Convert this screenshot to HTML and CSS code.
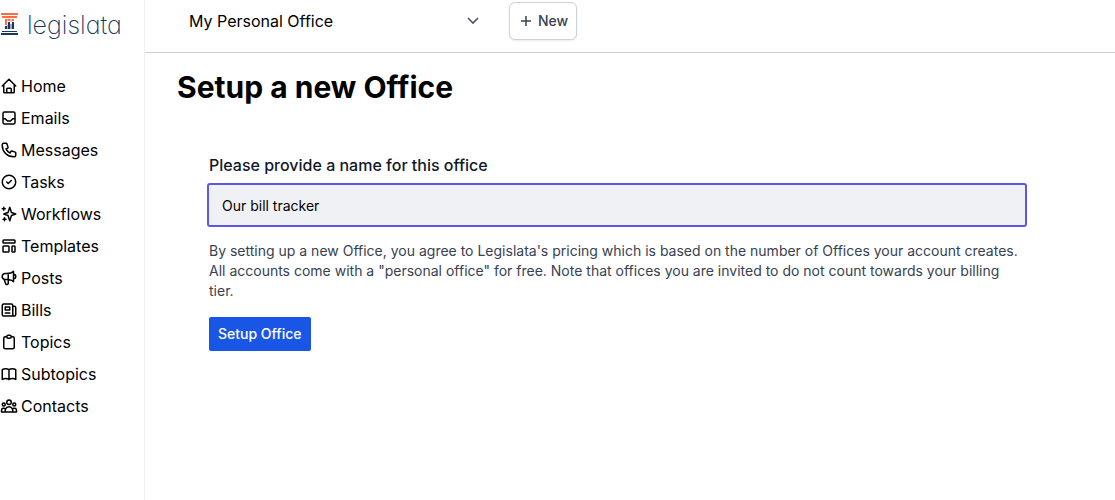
FILE: index.html
```html
<!DOCTYPE html>
<html lang="en">
<head>
<meta charset="utf-8">
<meta name="viewport" content="width=device-width, initial-scale=1">
<title>Setup a new Office - Legislata</title>
<link rel="stylesheet" href="styles.css">
</head>
<body>
<div class="app">
  <aside class="sidebar">
    <a class="logo" href="#">
      <svg class="logo-mark" viewBox="0 0 17 22" aria-hidden="true">
        <path fill="#ff6b45" d="M0 0h17v2H0zM1 3h15v2H1zM4 6h2v6H4zM7 6h2v2H7zM11 6h2v2h-2z"/>
        <path fill="#ff6b45" opacity=".45" d="M6 6h1v2H6zM9 6h2v3H9z"/>
        <path fill="#17375e" d="M4 13h2v3H4zM7 9h2v7H7zM11 9h2v7h-2zM1 18h15v1H1zM0 20h17v2H0z"/>
        <path fill="#17375e" opacity=".4" d="M6 12h1v4H6zM9 11h2v5H9z"/>
      </svg>
      <span>legislata</span>
    </a>
    <nav class="nav" aria-label="Main">
      <a href="#"><svg class="icon" viewBox="0 0 24 24"><path d="m3 12 2-2m0 0 7-7 7 7M5 10v10a1 1 0 0 0 1 1h3m10-11 2 2m-2-2v10a1 1 0 0 1-1 1h-3m-6 0v-5a1 1 0 0 1 1-1h4a1 1 0 0 1 1 1v5m-6 0h6"/></svg>Home</a>
      <a href="#"><svg class="icon" viewBox="0 0 24 24"><path d="M20 13V6a2 2 0 0 0-2-2H6a2 2 0 0 0-2 2v7m16 0v5a2 2 0 0 1-2 2H6a2 2 0 0 1-2-2v-5m16 0h-3l-3 3h-4l-3-3H4"/></svg>Emails</a>
      <a href="#"><svg class="icon" viewBox="0 0 24 24"><path d="M3 5a2 2 0 0 1 2-2h3.3a1 1 0 0 1 .9.7l1.5 4.5a1 1 0 0 1-.5 1.2l-2.2 1.1a11 11 0 0 0 5.5 5.5l1.1-2.2a1 1 0 0 1 1.2-.5l4.5 1.5a1 1 0 0 1 .7.9V19a2 2 0 0 1-2 2h-1C9.700 21 3 14.300 3 6z"/></svg>Messages</a>
      <a href="#"><svg class="icon" viewBox="0 0 24 24"><path d="m9 12 2 2 4-4"/><circle cx="12" cy="12" r="9"/></svg>Tasks</a>
      <a href="#"><svg class="icon" viewBox="0 0 24 24"><path d="M5 3v4M3 5h4M6 17v4M4 19h4M13 3l2.300 6.900L21 12l-5.700 2.100L13 21l-2.300-6.900L5 12l5.700-2.100z"/></svg>Workflows</a>
      <a href="#"><svg class="icon" viewBox="0 0 24 24"><path d="M4 5a1 1 0 0 1 1-1h14a1 1 0 0 1 1 1v2a1 1 0 0 1-1 1H5a1 1 0 0 1-1-1zM4 13a1 1 0 0 1 1-1h6a1 1 0 0 1 1 1v6a1 1 0 0 1-1 1H5a1 1 0 0 1-1-1zM16 13a1 1 0 0 1 1-1h2a1 1 0 0 1 1 1v6a1 1 0 0 1-1 1h-2a1 1 0 0 1-1-1z"/></svg>Templates</a>
      <a href="#"><svg class="icon" viewBox="0 0 24 24"><path d="M11 5.900v13.300a1.800 1.800 0 0 1-3.400.6l-2.200-6.100M18 13a3 3 0 1 0 0-6M5.400 13.700A4 4 0 0 1 7 6h1.800C12.900 6 16.500 4.800 18 3v14c-1.500-1.800-5.100-3-9.200-3H7a4 4 0 0 1-1.600-.3z"/></svg>Posts</a>
      <a href="#"><svg class="icon" viewBox="0 0 24 24"><path d="M19 20H5a2 2 0 0 1-2-2V6a2 2 0 0 1 2-2h10a2 2 0 0 1 2 2v1m2 13a2 2 0 0 1-2-2V7m2 13a2 2 0 0 0 2-2V9a2 2 0 0 0-2-2h-2M13 16H7M7 8h6v4H7z"/></svg>Bills</a>
      <a href="#"><svg class="icon" viewBox="0 0 24 24"><path d="M9 5H7a2 2 0 0 0-2 2v12a2 2 0 0 0 2 2h10a2 2 0 0 0 2-2V7a2 2 0 0 0-2-2h-2M9 5a2 2 0 0 0 2 2h2a2 2 0 0 0 2-2M9 5a2 2 0 0 1 2-2h2a2 2 0 0 1 2 2"/></svg>Topics</a>
      <a href="#"><svg class="icon" viewBox="0 0 24 24"><path d="M12 6.300v13M12 6.300C10.800 5.500 9.200 5 7.500 5S4.200 5.500 3 6.300v13c1.200-.8 2.800-1.300 4.500-1.300s3.300.5 4.500 1.300M12 6.300C13.200 5.500 14.800 5 16.500 5s3.300.5 4.500 1.300v13c-1.200-.8-2.800-1.300-4.500-1.300s-3.300.5-4.500 1.300"/></svg>Subtopics</a>
      <a href="#"><svg class="icon" viewBox="0 0 24 24"><path d="M17 20h5v-2a3 3 0 0 0-5.400-1.900M17 20H7m10 0v-2c0-.7-.1-1.300-.4-1.900M7 20H2v-2a3 3 0 0 1 5.400-1.900M7 20v-2c0-.7.1-1.300.4-1.900m0 0a5 5 0 0 1 9.200 0M15 7a3 3 0 1 1-6 0 3 3 0 0 1 6 0zm6 3a2 2 0 1 1-4 0 2 2 0 0 1 4 0zM7 10a2 2 0 1 1-4 0 2 2 0 0 1 4 0z"/></svg>Contacts</a>
    </nav>
  </aside>
  <div class="content">
    <header class="topbar">
      <div class="office-picker">
        <select class="office-select" aria-label="Office"><option>My Personal Office</option></select>
        <svg class="chevron" viewBox="0 0 16 16" aria-hidden="true"><path d="m3 6 5 5 5-5"/></svg>
      </div>
      <button class="new-button" type="button"><svg class="plus" viewBox="0 0 10 10" aria-hidden="true"><path d="M5 0v10M0 5h10"/></svg>New</button>
    </header>
    <main class="main">
      <h1 class="title">Setup a new Office</h1>
      <form class="form">
        <label class="label" for="office-name">Please provide a name for this office</label>
        <input class="input" id="office-name" type="text" value="Our bill tracker">
        <p class="note">By setting up a new Office, you agree to Legislata's pricing which is based on the number of Offices your account creates. All accounts come with a "personal office" for free. Note that offices you are invited to do not count towards your billing tier.</p>
        <button class="submit" type="button">Setup Office</button>
      </form>
    </main>
  </div>
</div>
</body>
</html>
```
FILE: styles.css
```css
*, *::before, *::after { box-sizing: border-box; }
body {
  margin: 0;
  background: #fff;
  color: #000;
  font: 16px/24px Inter, "Liberation Sans", sans-serif;
}
button, input, select { font: inherit; }
a { color: inherit; text-decoration: none; }
.app { display: flex; min-height: 100vh; }
.sidebar {
  flex: 0 0 145px;
  border-right: 1px solid #eeeff3;
}
.logo {
  display: flex;
  align-items: center;
  gap: 9px;
  height: 50px;
  padding-left: 1px;
  color: #17375e;
  font-size: 25px;
  font-weight: 200;
  font-feature-settings: "cv11";
}
.logo-mark { width: 17px; height: 22px; margin-bottom: 2px; }
.nav { display: grid; gap: 8px; padding-top: 24px; }
.nav a { display: flex; align-items: center; gap: 3px; }
.icon {
  width: 18px;
  height: 18px;
  fill: none;
  stroke: #000;
  stroke-width: 2;
  stroke-linecap: round;
  stroke-linejoin: round;
}
.content { flex: 1; min-width: 0; }
.topbar {
  display: flex;
  gap: 16px;
  padding: 2px 32px 12px;
  border-bottom: 1px solid #c9cfd8;
}
.office-picker { position: relative; width: 316px; }
.office-select {
  width: 100%;
  height: 38px;
  padding: 0 12px;
  border: 0;
  background: transparent;
  color: #000;
  appearance: none;
}
.chevron {
  position: absolute;
  top: 10px;
  right: 12px;
  width: 16px;
  height: 16px;
  fill: none;
  stroke: #4b5563;
  stroke-width: 1.6;
  pointer-events: none;
}
.new-button {
  display: flex;
  align-items: center;
  gap: 7px;
  height: 38px;
  padding: 0 8px 0 11px;
  border: 1px solid #cbd2dc;
  border-radius: 6px;
  background: #fff;
  box-shadow: 0 1px 2px rgb(0 0 0 / 8%);
  color: #374151;
  font-size: 14px;
  font-weight: 500;
}
.plus { width: 10px; height: 10px; stroke: #374151; stroke-width: 1.5; }
.main { padding: 16px 32px; }
.title { margin: 0; font-size: 30px; line-height: 36px; font-weight: 700; }
.form { max-width: 880px; padding: 48px 32px; }
.label { display: block; margin-bottom: 8px; color: #111827; font-weight: 500; }
.input {
  display: block;
  width: 100%;
  height: 40px;
  padding: 0 13px;
  border: 0;
  border-radius: 1px;
  outline: 2px solid #5c57e6;
  background: #f0f1f4;
  color: #000;
  font-size: 14px;
}
.note { margin: 16px 0; color: #374151; font-size: 14px; line-height: 20px; }
.submit {
  height: 34px;
  padding: 0 9px;
  border: 0;
  border-radius: 2px;
  background: #1a56e5;
  color: #fff;
  font-size: 14px;
  font-weight: 500;
}
```
